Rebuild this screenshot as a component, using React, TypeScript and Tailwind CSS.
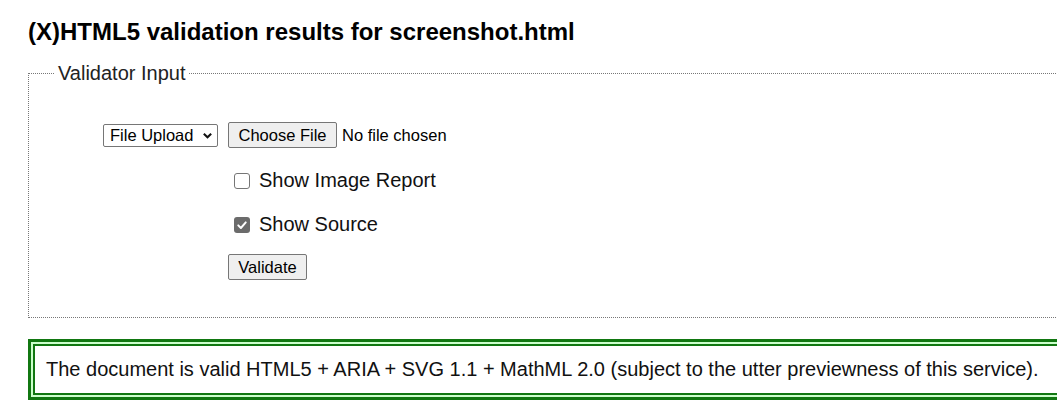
import React from "react";

const font = { fontFamily: '"Liberation Sans", Arial, sans-serif' };

function Checkbox({ checked }: { checked?: boolean }) {
  if (checked) {
    return (
      <span className="flex h-[16px] w-[16px] items-center justify-center rounded-[3px] bg-[#6b6b6b]">
        <svg viewBox="0 0 16 16" className="h-[12px] w-[12px]" fill="none">
          <path d="M3 8.5 L6.5 12 L13 4.5" stroke="#fff" strokeWidth="2.6" strokeLinecap="round" strokeLinejoin="round" />
        </svg>
      </span>
    );
  }
  return <span className="block h-[16px] w-[16px] rounded-[3px] border border-[#767676] bg-white" />;
}

export default function App() {
  return (
    <div className="h-[418px] w-screen overflow-hidden bg-white text-[#111]" style={font}>
      <div className="w-[1120px] pl-[28px] pt-[18px]">
        <h1 className="text-[24px] font-bold leading-[28px] text-black">
          (X)HTML5 validation results for screenshot.html
        </h1>

        <fieldset className="mt-[16px] h-[256px] border border-dotted border-[#777]">
          <legend className="ml-[26px] px-[3px] text-[20px] leading-[23px] text-[#222]">Validator Input</legend>

          <div className="flex flex-col pt-[37px]">
            <div className="flex items-center">
              <div className="ml-[74px] flex h-[23px] w-[115px] items-center justify-between rounded-[2px] border border-[#767676] pl-[6px] pr-[4px] text-[16.5px] text-black">
                <span>File Upload</span>
                <svg viewBox="0 0 12 12" className="h-[11px] w-[11px]" fill="none">
                  <path d="M2 4 L6 8 L10 4" stroke="#111" strokeWidth="2.2" />
                </svg>
              </div>
              <button className="ml-[10px] h-[26px] w-[109px] rounded-[2px] border border-[#767676] bg-[#efefef] text-[16.5px] text-black">
                Choose File
              </button>
              <span className="ml-[5px] text-[16.5px] text-black">No file chosen</span>
            </div>

            <div className="ml-[205px] mt-[21px] flex items-center gap-[9px] leading-[23px]">
              <Checkbox />
              <span className="text-[20px]">Show Image Report</span>
            </div>

            <div className="ml-[205px] mt-[21px] flex items-center gap-[9px] leading-[23px]">
              <Checkbox checked />
              <span className="text-[20px]">Show Source</span>
            </div>

            <div className="ml-[199px] mt-[18px]">
              <button className="h-[26px] w-[79px] rounded-[2px] border border-[#767676] bg-[#efefef] text-[16.5px] text-black">
                Validate
              </button>
            </div>
          </div>
        </fieldset>

        <div className="mt-[21px] border-[3px] border-[#117711] bg-[#ccffcc] p-[2px]">
          <div className="border-[2px] border-[#117711] bg-white px-[11px] py-[12px] text-[20px] leading-[23px] text-[#111]">
            The document is valid HTML5 + ARIA + SVG 1.1 + MathML 2.0 (subject to the utter previewness of this service).
          </div>
        </div>
      </div>
    </div>
  );
}
